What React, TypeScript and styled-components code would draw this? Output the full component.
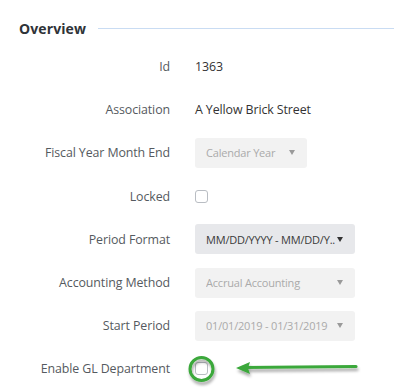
import React from "react";
import styled, { createGlobalStyle } from "styled-components";

const Global = createGlobalStyle`
  html, body { margin: 0; padding: 0; background: #fff; }
  body { font-family: "Open Sans", "Noto Sans", sans-serif; }
`;

const Page = styled.div`
  width: 394px;
  height: 389px;
  overflow: hidden;
  background: #fff;
`;

const Header = styled.div`
  display: flex;
  align-items: center;
  gap: 12px;
  padding: 18px 0 0 19px;
  height: 20px;
`;

const Title = styled.h2`
  margin: 0;
  font-size: 14px;
  font-weight: 700;
  color: #2f3338;
  letter-spacing: 0.1px;
`;

const Rule = styled.div`
  flex: 1;
  height: 1px;
  background: #c9dcf3;
  margin-top: 1px;
`;

const Form = styled.div`
  display: grid;
  grid-template-columns: 170px 1fr;
  column-gap: 25px;
  grid-auto-rows: 43.2px;
  align-items: center;
  margin-top: 7px;
`;

const Label = styled.div`
  text-align: right;
  font-size: 12.4px;
  letter-spacing: -0.1px;
  color: #555a60;
  white-space: nowrap;
`;

const Value = styled.div`
  font-size: 12.4px;
  letter-spacing: -0.1px;
  color: #333;
`;

const Cell = styled.div`
  position: relative;
  display: flex;
  align-items: center;
`;

const Select = styled.div<{ $w: number; $disabled?: boolean }>`
  box-sizing: border-box;
  width: ${(p) => p.$w}px;
  height: 30px;
  border-radius: 3px;
  background: ${(p) => (p.$disabled ? "#f2f2f2" : "#e7e8eb")};
  color: ${(p) => (p.$disabled ? "#aaaaaa" : "#3a3a3a")};
  font-size: 11px;
  letter-spacing: -0.2px;
  display: flex;
  align-items: center;
  padding: 0 12px 0 11px;
  gap: 2px;
`;

const SelectText = styled.span`
  flex: 1;
  min-width: 0;
  white-space: nowrap;
  overflow: hidden;
`;

const Caret = styled.span<{ $dark?: boolean }>`
  width: 0;
  height: 0;
  border-left: 3px solid transparent;
  border-right: 3px solid transparent;
  border-top: 5px solid ${(p) => (p.$dark ? "#333" : "#9a9a9a")};
  flex: none;
`;

const Check = styled.span`
  box-sizing: border-box;
  width: 13px;
  height: 13px;
  border: 1px solid #b9bdc3;
  border-radius: 3px;
  background: #fff;
  display: inline-block;
`;

const Annot = styled.svg`
  position: absolute;
  left: -10px;
  top: 50%;
  margin-top: -17px;
  overflow: visible;
  pointer-events: none;
`;

function Dropdown({ w, text, disabled }: { w: number; text: string; disabled?: boolean }) {
  return (
    <Select $w={w} $disabled={disabled}>
      <SelectText>{text}</SelectText>
      <Caret $dark={!disabled} />
    </Select>
  );
}

export default function App() {
  return (
    <Page>
      <Global />
      <Header>
        <Title>Overview</Title>
        <Rule />
      </Header>
      <Form>
        <Label>Id</Label>
        <Value>1363</Value>

        <Label>Association</Label>
        <Value>A Yellow Brick Street</Value>

        <Label>Fiscal Year Month End</Label>
        <Cell>
          <Dropdown w={112} text="Calendar Year" disabled />
        </Cell>

        <Label>Locked</Label>
        <Cell>
          <Check />
        </Cell>

        <Label>Period Format</Label>
        <Cell>
          <Dropdown w={160} text="MM/DD/YYYY - MM/DD/Y.." />
        </Cell>

        <Label>Accounting Method</Label>
        <Cell>
          <Dropdown w={160} text="Accrual Accounting" disabled />
        </Cell>

        <Label>Start Period</Label>
        <Cell>
          <Dropdown w={160} text="01/01/2019 - 01/31/2019" disabled />
        </Cell>

        <Label>Enable GL Department</Label>
        <Cell>
          <Check />
          <Annot width="190" height="34" viewBox="0 0 190 34">
            <defs>
              <filter id="sh" x="-20%" y="-50%" width="140%" height="200%">
                <feGaussianBlur in="SourceAlpha" stdDeviation="1.5" />
                <feOffset dx="1" dy="3" result="b" />
                <feComponentTransfer>
                  <feFuncA type="linear" slope="0.35" />
                </feComponentTransfer>
                <feMerge>
                  <feMergeNode />
                  <feMergeNode in="SourceGraphic" />
                </feMerge>
              </filter>
            </defs>
            <g filter="url(#sh)">
              <circle cx="16.5" cy="17" r="11.5" fill="none" stroke="#3aa83a" strokeWidth="3" />
              <path d="M58 15.5 L171 14.5" stroke="#3aa83a" strokeWidth="3.2" strokeLinecap="round" fill="none" />
              <path d="M51 16 L65 10 L63 16 L65 22 Z" fill="#3aa83a" />
            </g>
          </Annot>
        </Cell>
      </Form>
    </Page>
  );
}
